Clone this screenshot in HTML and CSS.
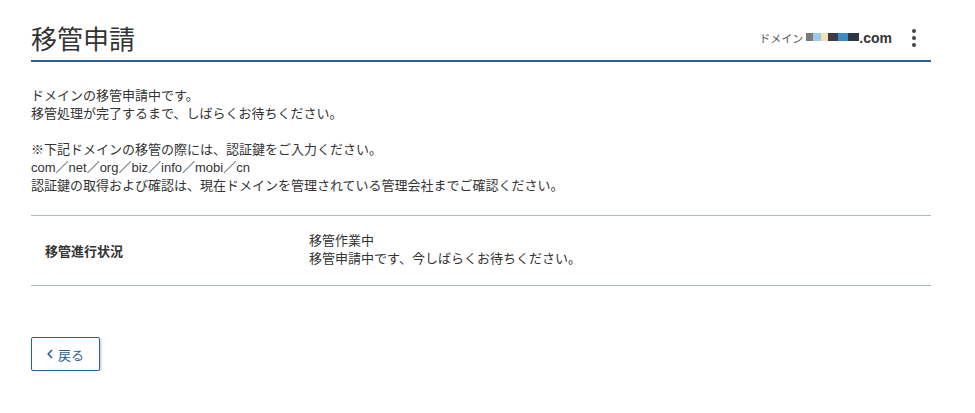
FILE: index.html
```html
<!DOCTYPE html>
<html lang="ja">
<head>
<meta charset="utf-8">
<title>移管申請</title>
<link rel="stylesheet" href="styles.css">
</head>
<body>
<div class="page">
  <div class="page-head">
    <h1 class="page-title">移管申請</h1>
    <div class="head-right">
      <span class="domain-label">ドメイン</span>
      <span class="domain-mask">
        <i class="m1"></i><i class="m2"></i><i class="m3"></i><i class="m4"></i><i class="m5"></i><i class="m6"></i>
      </span>
      <span class="domain-tld">.com</span>
      <span class="menu-dots"><i></i><i></i><i></i></span>
    </div>
  </div>

  <p class="msg">ドメインの移管申請中です。<br>移管処理が完了するまで、しばらくお待ちください。</p>
  <p class="msg">※下記ドメインの移管の際には、認証鍵をご入力ください。<br>com／net／org／biz／info／mobi／cn<br>認証鍵の取得および確認は、現在ドメインを管理されている管理会社までご確認ください。</p>

  <table class="status-table">
    <tr>
      <th>移管進行状況</th>
      <td>移管作業中<br>移管申請中です、今しばらくお待ちください。</td>
    </tr>
  </table>

  <button class="back-btn" type="button"><svg class="chev" width="6" height="10" viewBox="0 0 6 10"><path d="M5 1 L1.2 5 L5 9" fill="none" stroke="#2a5f9e" stroke-width="1.6"/></svg>戻る</button>
</div>
</body>
</html>
```

FILE: styles.css
```css
body {
  margin: 0;
  background: #ffffff;
  color: #333333;
  font-family: "Liberation Sans", "Noto Sans CJK JP", sans-serif;
}

.page {
  width: 900px;
  margin-left: 31px;
  padding-top: 20px;
}

.page-head {
  display: flex;
  align-items: center;
  justify-content: space-between;
  height: 40px;
  border-bottom: 2px solid #2a5f9e;
}

.page-title {
  margin: 0;
  font-size: 26px;
  font-weight: normal;
  color: #333333;
  line-height: 40px;
}

.head-right {
  display: flex;
  align-items: center;
  padding-right: 15px;
  margin-top: -4px;
}

.domain-label {
  font-size: 11px;
  color: #555555;
  margin-right: 3px;
}

.domain-mask {
  display: flex;
  height: 8px;
  margin-top: -3px;
}
.domain-mask i { display: block; height: 8px; }
.domain-mask .m1 { width: 7px; background: #7a7a7a; }
.domain-mask .m2 { width: 8px; background: #9ccbf0; }
.domain-mask .m3 { width: 7px; background: #f3e2b0; }
.domain-mask .m4 { width: 10px; background: #3b3f45; }
.domain-mask .m5 { width: 10px; background: #3d8ac8; }
.domain-mask .m6 { width: 11px; background: #2d3846; }

.domain-tld {
  font-size: 14px;
  font-weight: bold;
  color: #333333;
  margin-left: 0;
}

.menu-dots {
  display: flex;
  flex-direction: column;
  gap: 3px;
  margin-left: 20px;
}
.menu-dots i {
  display: block;
  width: 4px;
  height: 4px;
  border-radius: 50%;
  background: #444444;
}

.msg {
  font-size: 13px;
  line-height: 18px;
  margin: 25px 0 0 0;
}
.msg + .msg { margin-top: 18px; }

.status-table {
  width: 100%;
  border-collapse: collapse;
  margin-top: 20px;
  border-top: 1px solid #a9b9c6;
  border-bottom: 1px solid #a9b9c6;
  font-size: 13px;
}

.status-table th {
  width: 264px;
  text-align: left;
  font-weight: bold;
  padding: 16px 0 17px 14px;
  vertical-align: middle;
}

.status-table td {
  line-height: 18px;
  padding: 16px 0 17px 0;
}

.back-btn {
  display: flex;
  align-items: center;
  justify-content: center;
  gap: 5px;
  margin-top: 51px;
  width: 69px;
  height: 34px;
  padding: 0;
  background: #ffffff;
  border: 1px solid #2a5f9e;
  border-radius: 2px;
  box-shadow: 1px 2px 3px rgba(0, 0, 0, 0.25);
  color: #2a5f9e;
  font-family: "Liberation Sans", "Noto Sans CJK JP", sans-serif;
  font-size: 13px;
}
```
